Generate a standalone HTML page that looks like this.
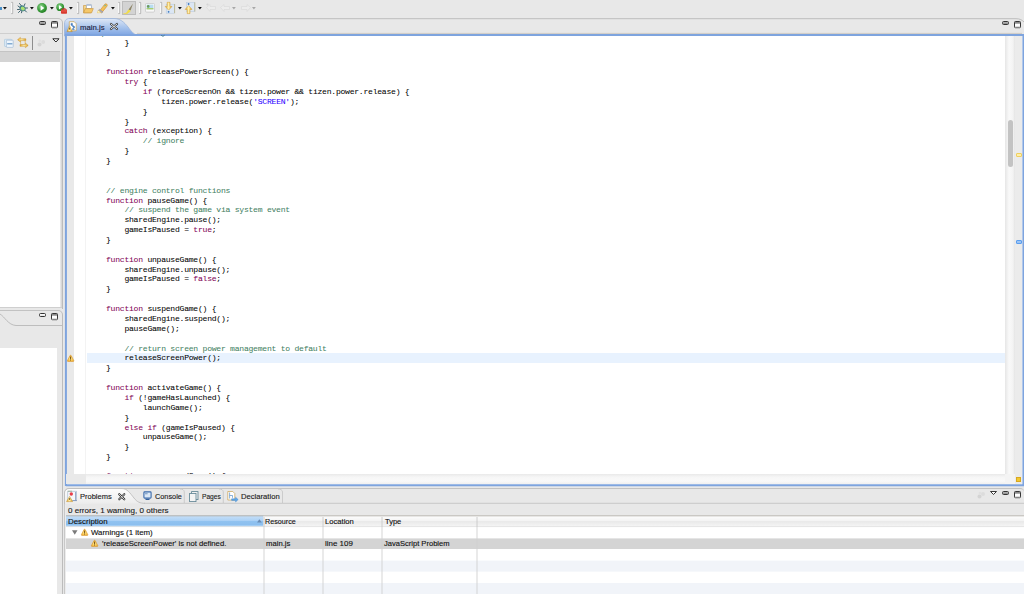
<!DOCTYPE html><html><head><meta charset="utf-8"><style>
*{margin:0;padding:0;box-sizing:border-box}
html,body{width:1024px;height:594px;overflow:hidden;background:#e8e8e8;font-family:"Liberation Sans",sans-serif;font-size:8px;color:#000}
body{position:relative}
.a{position:absolute}
.t{position:absolute;white-space:pre;line-height:10px;-webkit-text-stroke:0.12px currentColor}
.code{position:absolute;font-family:"Liberation Mono",monospace;font-size:8.1px;letter-spacing:-0.26px;white-space:pre;line-height:10px;color:#000;-webkit-text-stroke:0.04px currentColor}
.k{color:#7f0055}.c{color:#3f7f5f}.s{color:#2a00ff}
svg{position:absolute;overflow:visible}
</style></head><body>
<div class="a" style="left:0px;top:0px;width:1024px;height:18px;background:#e8e8e8"></div>
<svg style="left:0px;top:0px" width="1" height="1" viewBox="0 0 1 1"><defs><radialGradient id="gg" cx="0.4" cy="0.35" r="0.7"><stop offset="0" stop-color="#8fd48f"/><stop offset="0.6" stop-color="#3c9e3c"/><stop offset="1" stop-color="#1f7a1f"/></radialGradient><linearGradient id="au" x1="0" y1="0" x2="1" y2="0"><stop offset="0" stop-color="#e8a82a"/><stop offset="0.5" stop-color="#fff2b0"/><stop offset="1" stop-color="#e0a020"/></linearGradient></defs></svg>
<svg style="left:0px;top:0px" width="1" height="1" viewBox="0 0 1 1"><defs><radialGradient id="wg" cx="0.5" cy="0.55" r="0.6"><stop offset="0" stop-color="#fff0a0"/><stop offset="0.6" stop-color="#f8c850"/><stop offset="1" stop-color="#e8a030"/></radialGradient></defs></svg>
<div class="a" style="left:0px;top:7px;width:1.5px;height:3px;background:#4a90c8"></div>
<svg style="left:3.3px;top:7px" width="4" height="3" viewBox="0 0 4 3"><path d="M0 0H3.8L1.9 2.6Z" fill="#111"/></svg>
<svg style="left:11px;top:2px" width="3" height="12" viewBox="0 0 3 12"><path d="M0.2 0.4H1.7V11.6H0.2" fill="none" stroke="#a8a8a8" stroke-width="0.8"/><path d="M0.6 0.9V11.1" stroke="#fafafa" stroke-width="1"/></svg>
<svg style="left:17px;top:3px" width="11" height="10" viewBox="0 0 11 10"><path d="M2.5 0.5L4.5 3M1 3L3 4.5M0.5 6.5H2.5M1.5 9.5L3.5 7.5M4.5 9.8L5 7.5M9.5 9L7.5 7M10.5 5H8.5M8 0.8L7 3" stroke="#2f5560" stroke-width="0.9" stroke-linecap="round"/><ellipse cx="5.6" cy="5.3" rx="3.2" ry="2.6" transform="rotate(35 5.6 5.3)" fill="#3a7a8a"/><ellipse cx="5.8" cy="5.5" rx="2.2" ry="1.8" transform="rotate(35 5.8 5.5)" fill="#a8e070"/></svg>
<svg style="left:29.5px;top:7px" width="4" height="3" viewBox="0 0 4 3"><path d="M0 0H3.8L1.9 2.6Z" fill="#111"/></svg>
<svg style="left:37px;top:3px" width="10" height="10" viewBox="0 0 10 10"><circle cx="5" cy="5" r="4.9" fill="url(#gg)"/><path d="M3.6 2.4L7.4 5L3.6 7.8Z" fill="#fff"/></svg>
<svg style="left:49.5px;top:7px" width="4" height="3" viewBox="0 0 4 3"><path d="M0 0H3.8L1.9 2.6Z" fill="#111"/></svg>
<svg style="left:56px;top:2.5px" width="12" height="11" viewBox="0 0 12 11"><circle cx="4.2" cy="4.2" r="3.9" fill="url(#gg)"/><path d="M3 2.2L6.1 4.2L3 6.4Z" fill="#fff"/><rect x="5" y="6.3" width="6" height="4.4" rx="0.8" fill="#d83a2e"/><path d="M6.7 6.5V5.6H9.3V6.5" fill="none" stroke="#c03028" stroke-width="0.8"/><rect x="5.3" y="7.6" width="5.4" height="0.7" fill="#f07060"/></svg>
<svg style="left:69px;top:7px" width="4" height="3" viewBox="0 0 4 3"><path d="M0 0H3.8L1.9 2.6Z" fill="#111"/></svg>
<svg style="left:77px;top:2px" width="3" height="12" viewBox="0 0 3 12"><path d="M0.2 0.4H1.7V11.6H0.2" fill="none" stroke="#a8a8a8" stroke-width="0.8"/><path d="M0.6 0.9V11.1" stroke="#fafafa" stroke-width="1"/></svg>
<svg style="left:82.5px;top:3.5px" width="11" height="10" viewBox="0 0 11 10"><path d="M0.5 1.5H3.5L4.5 2.5H8V8.8H0.5Z" fill="#f3d48a" stroke="#c8923a" stroke-width="0.6"/><rect x="3.5" y="0.5" width="5" height="4" rx="0.6" fill="#fff" stroke="#8a9cb8" stroke-width="0.6"/><rect x="3.8" y="0.8" width="4.4" height="1" fill="#b0c0d8"/><path d="M0.7 8.8L2.2 4.6H10.3L8.6 8.8Z" fill="#f5c86a" stroke="#c8923a" stroke-width="0.6"/></svg>
<svg style="left:97px;top:3px" width="11" height="10" viewBox="0 0 11 10"><path d="M3 7.4L7.6 1.4C8.4 0.4 9.8 0.8 10.2 1.8C10.4 2.4 10.2 2.8 9.8 3.4L5 9.4Z" fill="#f4c25a" stroke="#d0892a" stroke-width="0.6"/><path d="M2.4 6.2L6 8.8L4.6 10L1.2 7.6Z" fill="#a8a8b8" stroke="#8a8a9a" stroke-width="0.4"/><path d="M0.4 9.8L1.2 7.4L4.2 9.6Z" fill="#fffbe0" stroke="#e8c040" stroke-width="0.5"/><path d="M7.4 3.2L8.8 2" stroke="#7ab89a" stroke-width="1.1"/></svg>
<svg style="left:110.5px;top:7px" width="4" height="3" viewBox="0 0 4 3"><path d="M0 0H3.8L1.9 2.6Z" fill="#111"/></svg>
<svg style="left:118px;top:2px" width="3" height="12" viewBox="0 0 3 12"><path d="M0.2 0.4H1.7V11.6H0.2" fill="none" stroke="#a8a8a8" stroke-width="0.8"/><path d="M0.6 0.9V11.1" stroke="#fafafa" stroke-width="1"/></svg>
<div class="a" style="left:121.8px;top:1px;width:14px;height:13.5px;background:#d3d3d3;border:1px solid #bcbcbc"></div>
<svg style="left:123px;top:2.5px" width="11" height="11" viewBox="0 0 11 11"><path d="M9.9 0.8L5.6 6.6L7.6 7.6Z" fill="#8c8468"/><path d="M0.6 10.6C2.5 10.4 3.2 9.8 4.4 8.2L5.2 6.6L7.8 7.8C6.8 9.4 5.6 10.2 3.8 10.6Z" fill="#f2de48"/><path d="M0.4 10.6H4.6" stroke="#f2d840" stroke-width="0.8"/></svg>
<svg style="left:139px;top:2px" width="3" height="12" viewBox="0 0 3 12"><path d="M0.2 0.4H1.7V11.6H0.2" fill="none" stroke="#a8a8a8" stroke-width="0.8"/><path d="M0.6 0.9V11.1" stroke="#fafafa" stroke-width="1"/></svg>
<svg style="left:145px;top:3.2px" width="10" height="9.5" viewBox="0 0 10 9.5"><rect x="0.5" y="0.5" width="9" height="8.6" rx="1" fill="#f8f8f8" stroke="#c4c4c4" stroke-width="0.7"/><rect x="1.6" y="1.6" width="6.8" height="4.6" fill="#b8dcf0"/><rect x="1.6" y="5" width="6.8" height="1.4" fill="#a8d070"/><circle cx="3.2" cy="3.4" r="1.3" fill="#6a9a5a"/></svg>
<svg style="left:160px;top:2px" width="3" height="12" viewBox="0 0 3 12"><path d="M0.2 0.4H1.7V11.6H0.2" fill="none" stroke="#a8a8a8" stroke-width="0.8"/><path d="M0.6 0.9V11.1" stroke="#fafafa" stroke-width="1"/></svg>
<svg style="left:165px;top:2px" width="11" height="12" viewBox="0 0 11 12"><rect x="1.2" y="2.2" width="8.4" height="9" fill="#dbe6f4" stroke="#b4c6de" stroke-width="0.5"/><path d="M9.6 2V11.2" stroke="#b8b080" stroke-width="0.8"/><circle cx="3.6" cy="9.8" r="0.9" fill="#3a78c0"/><path d="M2.2 0.3H5V4.4H7L3.6 8.2L0.2 4.4H2.2Z" fill="url(#au)" stroke="#d09a2a" stroke-width="0.5"/></svg>
<svg style="left:178px;top:7px" width="4" height="3" viewBox="0 0 4 3"><path d="M0 0H3.8L1.9 2.6Z" fill="#111"/></svg>
<svg style="left:185px;top:2px" width="11" height="12" viewBox="0 0 11 12"><rect x="1.4" y="0.6" width="8.4" height="9" fill="#dbe6f4" stroke="#b4c6de" stroke-width="0.5"/><path d="M9.8 0.4V9.6" stroke="#b8b080" stroke-width="0.8"/><circle cx="3.6" cy="2" r="0.9" fill="#3a78c0"/><path d="M2.2 11.6H5V7.4H7L3.6 3.6L0.2 7.4H2.2Z" fill="url(#au)" stroke="#d09a2a" stroke-width="0.5"/></svg>
<svg style="left:198px;top:7px" width="4" height="3" viewBox="0 0 4 3"><path d="M0 0H3.8L1.9 2.6Z" fill="#111"/></svg>
<svg style="left:206px;top:3px" width="11" height="9" viewBox="0 0 11 9"><path d="M0.5 4.5L4 1.5V3.5H9.5V6.5H4V8.5Z" fill="#ececec" stroke="#dadada" stroke-width="0.7"/><circle cx="1.5" cy="1.5" r="1.1" fill="#d4d4d4"/></svg>
<svg style="left:220px;top:3px" width="11" height="9" viewBox="0 0 11 9"><path d="M0.5 4.5L4 1.5V3.5H9.5V6.5H4V8.5Z" fill="#ececec" stroke="#dadada" stroke-width="0.7"/></svg>
<svg style="left:232px;top:7px" width="4" height="3" viewBox="0 0 4 3"><path d="M0 0H3.8L1.9 2.6Z" fill="#a8a8a8"/></svg>
<svg style="left:240px;top:3px" width="11" height="9" viewBox="0 0 11 9"><path d="M10.5 4.5L7 1.5V3.5H1.5V6.5H7V8.5Z" fill="#ececec" stroke="#dadada" stroke-width="0.7"/></svg>
<svg style="left:252px;top:7px" width="4" height="3" viewBox="0 0 4 3"><path d="M0 0H3.8L1.9 2.6Z" fill="#a8a8a8"/></svg>
<div class="a" style="left:0px;top:18px;width:63px;height:291px;background:#e8e8e8;border-top:1px solid #c2c2c2;border-right:1px solid #bcbcbc;border-top-right-radius:5px"></div>
<div class="a" style="left:0px;top:33px;width:62px;height:1px;background:#cfcfcf"></div>
<div class="a" style="left:39px;top:21px;width:7px;height:3.6px;border:1px solid #333;border-radius:1.5px;background:linear-gradient(#b8b8b8,#8a8a8a)"></div>
<svg style="left:51px;top:21px" width="7" height="7.2" viewBox="0 0 7 7.2"><rect x="0.5" y="0.5" width="6" height="6.2" rx="0.8" fill="#fff" stroke="#333" stroke-width="1"/><rect x="1" y="1" width="5" height="1.3" fill="#a0a0a0"/><path d="M1 2.1H6" stroke="#444" stroke-width="0.6"/><rect x="1" y="5.6" width="5" height="0.9" fill="#b0b0b0"/></svg>
<svg style="left:4px;top:39px" width="10" height="9" viewBox="0 0 10 9"><rect x="0.5" y="0.3" width="7.2" height="7.2" rx="0.6" fill="#dcebf8" stroke="#a8c4dc" stroke-width="0.6"/><rect x="2.4" y="1.2" width="6.8" height="7.2" rx="0.6" fill="#eef6fd" stroke="#98b4d0" stroke-width="0.6"/><rect x="3.2" y="4.2" width="5.2" height="1.2" fill="#6a9ac8"/></svg>
<svg style="left:17px;top:37px" width="12" height="12" viewBox="0 0 12 12"><path d="M0.6 2.7L3.4 0.4V1.8H8.8V3.6H3.4V5Z" fill="url(#au)" stroke="#c8902a" stroke-width="0.5"/><path d="M11.2 8.4L8.4 6.1V7.5H3V9.3H8.4V10.7Z" fill="url(#au)" stroke="#c8902a" stroke-width="0.5"/><path d="M3.6 3.6V7.5M8.2 3.6V7.5" stroke="#d8a840" stroke-width="0.6"/></svg>
<div class="a" style="left:32.3px;top:36px;width:1px;height:14px;background:#8e8e8e"></div>
<svg style="left:37px;top:39px" width="9" height="8" viewBox="0 0 9 8"><circle cx="2.5" cy="5.5" r="2" fill="#d4d4d4"/><circle cx="6.2" cy="3" r="2" fill="#dcdcdc"/><circle cx="2.8" cy="1.8" r="1.3" fill="#e0e0e0"/></svg>
<svg style="left:51.5px;top:37.5px" width="8" height="5" viewBox="0 0 8 5"><path d="M0.8 0.8H7L3.9 4Z" fill="#fff" stroke="#222" stroke-width="1"/></svg>
<div class="a" style="left:0px;top:50.5px;width:60px;height:11.5px;background:#d4d4d4;border-top:1.5px solid #c4c4c4"></div>
<div class="a" style="left:0px;top:62px;width:60px;height:245px;background:#fff"></div>
<div class="a" style="left:60px;top:51px;width:2px;height:256px;background:linear-gradient(to right,#eeeeee,#d0d0d0)"></div>
<div class="a" style="left:0px;top:307px;width:62px;height:1px;background:#cfcfcf"></div>
<div class="a" style="left:0px;top:310px;width:63px;height:284px;background:#e8e8e8;border-top:1px solid #c2c2c2;border-right:1px solid #bcbcbc;border-top-right-radius:5px"></div>
<svg style="left:0px;top:311px" width="62" height="16" viewBox="0 0 62 16"><path d="M0 3C5 6 8 14 16 14.5H62" fill="none" stroke="#bdbdbd" stroke-width="1"/></svg>
<div class="a" style="left:39px;top:313px;width:7px;height:3.6px;border:1px solid #333;border-radius:1.5px;background:linear-gradient(#fff,#e4e4e4)"></div>
<svg style="left:51px;top:313px" width="7" height="7.2" viewBox="0 0 7 7.2"><rect x="0.5" y="0.5" width="6" height="6.2" rx="0.8" fill="#fff" stroke="#333" stroke-width="1"/><rect x="1" y="1" width="5" height="1.3" fill="#a0a0a0"/><path d="M1 2.1H6" stroke="#444" stroke-width="0.6"/><rect x="1" y="5.6" width="5" height="0.9" fill="#b0b0b0"/></svg>
<div class="a" style="left:0px;top:348px;width:57px;height:246px;background:#fff"></div>
<svg style="left:110px;top:17px" width="914" height="19" viewBox="0 0 914 19"><path d="M0 1.7H906C910 1.7 912 3 914 5" fill="none" stroke="#bdbdbd" stroke-width="1"/></svg>
<div class="a" style="left:1002px;top:21px;width:7px;height:3.6px;border:1px solid #333;border-radius:1.5px;background:linear-gradient(#b8b8b8,#8a8a8a)"></div>
<svg style="left:1014px;top:21px" width="7" height="7.2" viewBox="0 0 7 7.2"><rect x="0.5" y="0.5" width="6" height="6.2" rx="0.8" fill="#fff" stroke="#333" stroke-width="1"/><rect x="1" y="1" width="5" height="1.3" fill="#a0a0a0"/><path d="M1 2.1H6" stroke="#444" stroke-width="0.6"/><rect x="1" y="5.6" width="5" height="0.9" fill="#b0b0b0"/></svg>
<svg style="left:64px;top:18px" width="75" height="18" viewBox="0 0 75 18"><defs><linearGradient id="tg" x1="0" y1="0" x2="0" y2="1"><stop offset="0" stop-color="#dfe8f6"/><stop offset="0.5" stop-color="#a8c4ec"/><stop offset="1" stop-color="#7aa2e2"/></linearGradient></defs><path d="M0.5 18V6C0.5 2 2.5 0.5 6 0.5H50C56 0.5 60 4 64 9C67 13 70 17 75 18Z" fill="url(#tg)" stroke="#9ab4dc" stroke-width="0.8"/></svg>
<svg style="left:66px;top:21px" width="12" height="12" viewBox="0 0 12 12"><path d="M3.3 0.7H8.2L10.2 2.7V9.8H3.3Z" fill="#fff" stroke="#c8a050" stroke-width="0.7"/><path d="M5 2.4H6.4V4.2H5ZM5.6 4.4C7.6 4.4 8.6 5.2 8.6 6.2C8.6 7.6 7 7.4 6.2 7.8C5.6 8.2 6.4 8.8 8.6 8.6" fill="#4a80c0" stroke="#4a80c0" stroke-width="0.6"/><path d="M3.6 4.8L6.2 10.6H1Z" fill="url(#au)" stroke="#c08a20" stroke-width="0.5" stroke-linejoin="round"/><path d="M3.6 6.6V8.6" stroke="#5a3a00" stroke-width="0.8"/></svg>
<div class="t" style="left:80.4px;top:22.67px;font-size:7.6px;color:#1c1c3c;transform-origin:0 0;transform:scaleX(1.0219);">main.js</div>
<svg style="left:110px;top:23px" width="8" height="7" viewBox="0 0 8 7"><path d="M1 1L7 6M7 1L1 6" stroke="#333" stroke-width="2.2" stroke-linecap="round"/><path d="M1 1L7 6M7 1L1 6" stroke="#fff" stroke-width="0.9" stroke-linecap="round"/></svg>
<div class="a" style="left:66px;top:35px;width:957px;height:450px;background:#fff"></div>
<div class="a" style="left:66px;top:36px;width:8px;height:438px;background:#e9e9e9"></div>
<div class="a" style="left:85px;top:36px;width:1px;height:438px;background:#f3f3f3"></div>
<div class="a" style="left:87px;top:353px;width:918px;height:10px;background:#e8f2fe"></div>
<svg style="left:67px;top:354px" width="8" height="8" viewBox="0 0 8 8"><path d="M3.6 1.2C3.9 1.2 4.1 1.4 4.3 1.8L6.7 6.4C7 7 6.8 7.4 6.1 7.4H1.1C0.4 7.4 0.2 7 0.5 6.4L2.9 1.8C3.1 1.4 3.3 1.2 3.6 1.2Z" fill="url(#wg)" stroke="#d89428" stroke-width="0.6"/><path d="M3.6 3V5.2" stroke="#6a4000" stroke-width="0.9" stroke-linecap="round"/><circle cx="3.6" cy="6.3" r="0.45" fill="#6a4000"/></svg>
<div class="a" style="left:1005px;top:36px;width:10px;height:438px;background:linear-gradient(to right,#e6e6e6,#f9f9f9 40%,#f3f3f3 80%,#e4e4e4)"></div>
<div class="a" style="left:1007.5px;top:120px;width:5px;height:47px;background:#c3c3c3;border-radius:2.5px"></div>
<div class="a" style="left:1015px;top:36px;width:7px;height:438px;background:#ebebeb"></div>
<div class="a" style="left:1016px;top:153px;width:6px;height:4px;background:#fff0a8;border:1px solid #f0cf60;border-radius:1px"></div>
<div class="a" style="left:1016px;top:240px;width:6px;height:4px;background:#9cc4f4;border:1px solid #5a9ef0;border-radius:1px"></div>
<svg style="left:0px;top:0px" width="1024" height="594" viewBox="0 0 1024 594"><path d="M137 33.4H1022" stroke="#c9c4bb" stroke-width="0.8"/><path d="M65.9 486V34.9H1023.4V485.2H65.9" fill="none" stroke="#7ea4de" stroke-width="2"/></svg>
<div class="a" style="left:66px;top:474px;width:20px;height:10px;background:#e9e9e9"></div>
<div class="a" style="left:86px;top:474px;width:919px;height:10px;background:linear-gradient(to bottom,#e9e9e9,#f6f6f6 30%,#f9f9f9 70%,#f0f0f0)"></div>
<div class="a" style="left:1005px;top:474px;width:10px;height:10px;background:#f4f4f4"></div>
<div class="a" style="left:1015px;top:474px;width:7px;height:10px;background:#ebebeb"></div>
<div class="a" style="left:1016px;top:477px;width:5px;height:4.5px;background:#f2c830;border:0.5px solid #d8a820"></div>
<div class="a" style="left:86px;top:36px;width:919px;height:438px;overflow:hidden">
<div class="code" style="left:1.60px;top:-8.27px"><span class="c">// power screen release handled below</span></div>
<div class="code" style="left:38.40px;top:1.60px">}</div>
<div class="code" style="left:20.00px;top:11.47px">}</div>
<div class="code" style="left:20.00px;top:31.21px"><span class="k">function</span> releasePowerScreen() {</div>
<div class="code" style="left:38.40px;top:41.08px"><span class="k">try</span> {</div>
<div class="code" style="left:56.80px;top:50.95px"><span class="k">if</span> (forceScreenOn &amp;&amp; tizen.power &amp;&amp; tizen.power.release) {</div>
<div class="code" style="left:75.20px;top:60.82px">tizen.power.release(<span class="s">'SCREEN'</span>);</div>
<div class="code" style="left:56.80px;top:70.69px">}</div>
<div class="code" style="left:38.40px;top:80.56px">}</div>
<div class="code" style="left:38.40px;top:90.43px"><span class="k">catch</span> (exception) {</div>
<div class="code" style="left:56.80px;top:100.30px"><span class="c">// ignore</span></div>
<div class="code" style="left:38.40px;top:110.17px">}</div>
<div class="code" style="left:20.00px;top:120.04px">}</div>
<div class="code" style="left:20.00px;top:149.65px"><span class="c">// engine control functions</span></div>
<div class="code" style="left:20.00px;top:159.52px"><span class="k">function</span> pauseGame() {</div>
<div class="code" style="left:38.40px;top:169.39px"><span class="c">// suspend the game via system event</span></div>
<div class="code" style="left:38.40px;top:179.26px">sharedEngine.pause();</div>
<div class="code" style="left:38.40px;top:189.13px">gameIsPaused = <span class="k">true</span>;</div>
<div class="code" style="left:20.00px;top:199.00px">}</div>
<div class="code" style="left:20.00px;top:218.74px"><span class="k">function</span> unpauseGame() {</div>
<div class="code" style="left:38.40px;top:228.61px">sharedEngine.unpause();</div>
<div class="code" style="left:38.40px;top:238.48px">gameIsPaused = <span class="k">false</span>;</div>
<div class="code" style="left:20.00px;top:248.35px">}</div>
<div class="code" style="left:20.00px;top:268.09px"><span class="k">function</span> suspendGame() {</div>
<div class="code" style="left:38.40px;top:277.96px">sharedEngine.suspend();</div>
<div class="code" style="left:38.40px;top:287.83px">pauseGame();</div>
<div class="code" style="left:38.40px;top:307.57px"><span class="c">// return screen power management to default</span></div>
<div class="code" style="left:38.40px;top:317.44px">releaseScreenPower();</div>
<div class="code" style="left:20.00px;top:327.31px">}</div>
<div class="code" style="left:20.00px;top:347.05px"><span class="k">function</span> activateGame() {</div>
<div class="code" style="left:38.40px;top:356.92px"><span class="k">if</span> (!gameHasLaunched) {</div>
<div class="code" style="left:56.80px;top:366.79px">launchGame();</div>
<div class="code" style="left:38.40px;top:376.66px">}</div>
<div class="code" style="left:38.40px;top:386.53px"><span class="k">else</span> <span class="k">if</span> (gameIsPaused) {</div>
<div class="code" style="left:56.80px;top:396.40px">unpauseGame();</div>
<div class="code" style="left:38.40px;top:406.27px">}</div>
<div class="code" style="left:20.00px;top:416.14px">}</div>
<div class="code" style="left:20.00px;top:434.88px"><span class="k">function</span> unsuspendGame() {</div>
</div>
<svg style="left:160px;top:34px" width="6" height="3" viewBox="0 0 6 3"><path d="M1.2 1.2C2 2.4 3.6 2.4 4.6 1.2" fill="none" stroke="#2a6a7a" stroke-width="1" opacity="0.8"/></svg>
<div class="a" style="left:64px;top:488px;width:960px;height:106px;background:#e8e8e8;border-top:1px solid #c2c2c2;border-left:1px solid #c8c8c8;border-top-left-radius:5px;border-top-right-radius:4px"></div>
<svg style="left:64px;top:488px" width="230" height="17" viewBox="0 0 230 17"><defs><linearGradient id="pg" x1="0" y1="0" x2="0" y2="1"><stop offset="0" stop-color="#fdfdfd"/><stop offset="1" stop-color="#ececec"/></linearGradient></defs><path d="M0.5 16V5C0.5 2.5 2.5 0.5 5 0.5H58C63 0.5 66 5 70 10C73 14 76 15.3 81 15.3" fill="url(#pg)" stroke="#b8b8b8" stroke-width="0.8"/><path d="M116 1C118.5 1 120.3 2 120.3 4V15" fill="none" stroke="#c4c4c4" stroke-width="0.8"/><path d="M155 1C157.5 1 159.3 2 159.3 4V15" fill="none" stroke="#c4c4c4" stroke-width="0.8"/><path d="M214 1C216.5 1 218.5 2 218.5 4V15" fill="none" stroke="#c4c4c4" stroke-width="0.8"/></svg>
<svg style="left:144px;top:503px" width="880" height="1" viewBox="0 0 880 1"><path d="M0 0.3H880" stroke="#c4c4c4" stroke-width="0.9"/></svg>
<svg style="left:66px;top:490px" width="12" height="13" viewBox="0 0 12 13"><rect x="1.8" y="1.2" width="8.8" height="9.4" fill="#f4f8fb" stroke="#a0b4c8" stroke-width="0.6"/><path d="M1.8 1.2H6" stroke="#8aa080" stroke-width="0.7"/><path d="M9.6 2V10.5M6.5 10.6H11" stroke="#7a90b8" stroke-width="0.8"/><circle cx="5.3" cy="4" r="1.7" fill="#e8404a"/><path d="M3.6 6.4L6.6 11.6H0.6Z" fill="url(#au)" stroke="#c08a20" stroke-width="0.5" stroke-linejoin="round"/><path d="M3.6 8V10" stroke="#5a3a00" stroke-width="0.7"/></svg>
<div class="t" style="left:80.4px;top:492.00px;font-size:7.5px;color:#222;transform-origin:0 0;transform:scaleX(1.0008);">Problems</div>
<svg style="left:117.8px;top:492.8px" width="8" height="8" viewBox="0 0 8 8"><path d="M1.2 1.2L6.3 6.3M6.3 1.2L1.2 6.3" stroke="#333" stroke-width="2.1" stroke-linecap="round"/><path d="M1.2 1.2L6.3 6.3M6.3 1.2L1.2 6.3" stroke="#f4f4f4" stroke-width="0.8" stroke-linecap="round"/></svg>
<svg style="left:142.5px;top:491.3px" width="9" height="9" viewBox="0 0 9 9"><rect x="0.9" y="0.9" width="7.2" height="6.2" rx="0.8" fill="#dbe8f6" stroke="#3a6aaa" stroke-width="1.1"/><rect x="2" y="2.4" width="2.6" height="0.8" fill="#5a80b0"/><path d="M2.5 8.4H6.5" stroke="#2a5a9a" stroke-width="1.1"/></svg>
<div class="t" style="left:154.9px;top:492.00px;font-size:7.5px;color:#222;transform-origin:0 0;transform:scaleX(0.9776);">Console</div>
<svg style="left:188.5px;top:490.8px" width="10" height="11" viewBox="0 0 10 11"><rect x="2.6" y="0.6" width="6.4" height="8" fill="#f0f0f0" stroke="#5a8090" stroke-width="0.8"/><rect x="0.6" y="2.4" width="6.4" height="8.2" fill="#f4f4f4" stroke="#5a8090" stroke-width="0.8"/></svg>
<div class="t" style="left:202px;top:492.00px;font-size:7.5px;color:#222;transform-origin:0 0;transform:scaleX(0.8841);">Pages</div>
<svg style="left:226.5px;top:490.8px" width="12" height="11" viewBox="0 0 12 11"><path d="M0.8 0.5H5.8L7.8 2.5V9H0.8Z" fill="#fff" stroke="#c8a050" stroke-width="0.7"/><path d="M2.6 1.5V7.5M2.6 4.5H5.5V6.8" stroke="#5a90c8" stroke-width="0.7" fill="none"/><path d="M4.6 7.8H8.6V6.2L11.2 8.6L8.6 11V9.4H4.6Z" fill="#60a8e8" stroke="#3a80c8" stroke-width="0.4"/></svg>
<div class="t" style="left:240.7px;top:492.00px;font-size:7.5px;color:#222;transform-origin:0 0;transform:scaleX(1.0202);">Declaration</div>
<svg style="left:977px;top:491px" width="9" height="8" viewBox="0 0 9 8"><circle cx="2.5" cy="5.5" r="2" fill="#d4d4d4"/><circle cx="6" cy="3" r="2" fill="#dcdcdc"/><circle cx="3" cy="2" r="1.3" fill="#e0e0e0"/></svg>
<svg style="left:990px;top:491px" width="7" height="4" viewBox="0 0 7 4"><path d="M0.5 0.5H6.5L3.5 3.5Z" fill="#fff" stroke="#222" stroke-width="0.9"/></svg>
<div class="a" style="left:1002px;top:491px;width:7px;height:3.6px;border:1px solid #333;border-radius:1.5px;background:linear-gradient(#b8b8b8,#8a8a8a)"></div>
<svg style="left:1014px;top:491px" width="7" height="7.2" viewBox="0 0 7 7.2"><rect x="0.5" y="0.5" width="6" height="6.2" rx="0.8" fill="#fff" stroke="#333" stroke-width="1"/><rect x="1" y="1" width="5" height="1.3" fill="#a0a0a0"/><path d="M1 2.1H6" stroke="#444" stroke-width="0.6"/><rect x="1" y="5.6" width="5" height="0.9" fill="#b0b0b0"/></svg>
<div class="t" style="left:67.75px;top:506.00px;font-size:7.5px;color:#222;transform-origin:0 0;transform:scaleX(1.0727);">0 errors, 1 warning, 0 others</div>
<div class="a" style="left:66px;top:515.5px;width:958px;height:78.5px;background:#fff"></div>
<svg style="left:0px;top:0px" width="1024" height="594" viewBox="0 0 1024 594"><defs><linearGradient id="hb" x1="0" y1="0" x2="0" y2="1"><stop offset="0" stop-color="#c8e0f8"/><stop offset="0.45" stop-color="#add2f6"/><stop offset="0.52" stop-color="#90c2f0"/><stop offset="0.82" stop-color="#8cbfef"/><stop offset="1" stop-color="#bcdcf8"/></linearGradient><linearGradient id="hw" x1="0" y1="0" x2="0" y2="1"><stop offset="0" stop-color="#fefefe"/><stop offset="0.5" stop-color="#f3f3f3"/><stop offset="0.55" stop-color="#e9e9e9"/><stop offset="1" stop-color="#f5f5f5"/></linearGradient></defs><rect x="66" y="515.5" width="197.5" height="11" fill="url(#hb)"/><rect x="263.5" y="515.5" width="761" height="11" fill="url(#hw)"/><path d="M66 515.8H1024" stroke="#a8a49e" stroke-width="0.8"/><path d="M66 526.6H1024" stroke="#d4d4d4" stroke-width="0.6"/></svg>
<div class="t" style="left:67.75px;top:517.10px;font-size:7.5px;color:#111;transform-origin:0 0;transform:scaleX(1.0556);">Description</div>
<svg style="left:256.5px;top:519px" width="5" height="4" viewBox="0 0 5 4"><path d="M0 3.5L2.4 0.3L4.8 3.5Z" fill="#6a8cb4"/></svg>
<div class="t" style="left:265.3px;top:517.10px;font-size:7.5px;color:#111;transform-origin:0 0;transform:scaleX(0.9565);">Resource</div>
<div class="t" style="left:325px;top:517.10px;font-size:7.5px;color:#111;transform-origin:0 0;transform:scaleX(1.0157);">Location</div>
<div class="t" style="left:384.6px;top:517.10px;font-size:7.5px;color:#111;transform-origin:0 0;transform:scaleX(1.0025);">Type</div>
<svg style="left:262.5px;top:516.5px" width="2" height="10" viewBox="0 0 2 10"><path d="M1 0V10" stroke="#c8c8c8" stroke-width="0.9"/></svg>
<svg style="left:321.7px;top:516.5px" width="2" height="10" viewBox="0 0 2 10"><path d="M1 0V10" stroke="#c8c8c8" stroke-width="0.9"/></svg>
<svg style="left:381.4px;top:516.5px" width="2" height="10" viewBox="0 0 2 10"><path d="M1 0V10" stroke="#c8c8c8" stroke-width="0.9"/></svg>
<svg style="left:476.2px;top:516.5px" width="2" height="10" viewBox="0 0 2 10"><path d="M1 0V10" stroke="#c8c8c8" stroke-width="0.9"/></svg>
<svg style="left:0px;top:0px" width="1024" height="594" viewBox="0 0 1024 594"><rect x="66" y="538.4" width="958" height="10.6" fill="#d4d4d4"/><rect x="66" y="560.6" width="958" height="11" fill="#f1f4f9"/><rect x="66" y="583" width="958" height="11" fill="#f1f4f9"/></svg>
<svg style="left:262.5px;top:527px" width="2" height="67" viewBox="0 0 2 67"><path d="M1 0V67" stroke="#d0d0d0" stroke-width="0.9"/></svg>
<svg style="left:321.7px;top:527px" width="2" height="67" viewBox="0 0 2 67"><path d="M1 0V67" stroke="#d0d0d0" stroke-width="0.9"/></svg>
<svg style="left:381.4px;top:527px" width="2" height="67" viewBox="0 0 2 67"><path d="M1 0V67" stroke="#d0d0d0" stroke-width="0.9"/></svg>
<svg style="left:476.2px;top:527px" width="2" height="67" viewBox="0 0 2 67"><path d="M1 0V67" stroke="#d0d0d0" stroke-width="0.9"/></svg>
<svg style="left:71.7px;top:529.9px" width="6" height="5" viewBox="0 0 6 5"><path d="M0 0.2H5.5L2.75 4.8Z" fill="#7a7a7a"/></svg>
<svg style="left:80.6px;top:528px" width="8" height="8" viewBox="0 0 8 8"><path d="M3.6 1.2C3.9 1.2 4.1 1.4 4.3 1.8L6.7 6.4C7 7 6.8 7.4 6.1 7.4H1.1C0.4 7.4 0.2 7 0.5 6.4L2.9 1.8C3.1 1.4 3.3 1.2 3.6 1.2Z" fill="url(#wg)" stroke="#d89428" stroke-width="0.6"/><path d="M3.6 3V5.2" stroke="#6a4000" stroke-width="0.9" stroke-linecap="round"/><circle cx="3.6" cy="6.3" r="0.45" fill="#6a4000"/></svg>
<div class="t" style="left:90.8px;top:528.40px;font-size:7.5px;color:#111;transform-origin:0 0;transform:scaleX(1.0476);">Warnings (1 item)</div>
<svg style="left:90.8px;top:539.2px" width="8" height="8" viewBox="0 0 8 8"><path d="M3.6 1.2C3.9 1.2 4.1 1.4 4.3 1.8L6.7 6.4C7 7 6.8 7.4 6.1 7.4H1.1C0.4 7.4 0.2 7 0.5 6.4L2.9 1.8C3.1 1.4 3.3 1.2 3.6 1.2Z" fill="url(#wg)" stroke="#d89428" stroke-width="0.6"/><path d="M3.6 3V5.2" stroke="#6a4000" stroke-width="0.9" stroke-linecap="round"/><circle cx="3.6" cy="6.3" r="0.45" fill="#6a4000"/></svg>
<div class="t" style="left:101.7px;top:539.30px;font-size:7.5px;color:#111;transform-origin:0 0;transform:scaleX(1.0251);">'releaseScreenPower' is not defined.</div>
<div class="t" style="left:265.5px;top:539.30px;font-size:7.5px;color:#111;transform-origin:0 0;transform:scaleX(1.0271);">main.js</div>
<div class="t" style="left:325px;top:539.30px;font-size:7.5px;color:#111;transform-origin:0 0;transform:scaleX(1.0582);">line 109</div>
<div class="t" style="left:383.5px;top:539.30px;font-size:7.5px;color:#111;transform-origin:0 0;transform:scaleX(1.0074);">JavaScript Problem</div>
<div class="a" style="left:65px;top:505px;width:1px;height:89px;background:#ececec"></div>
</body></html>
